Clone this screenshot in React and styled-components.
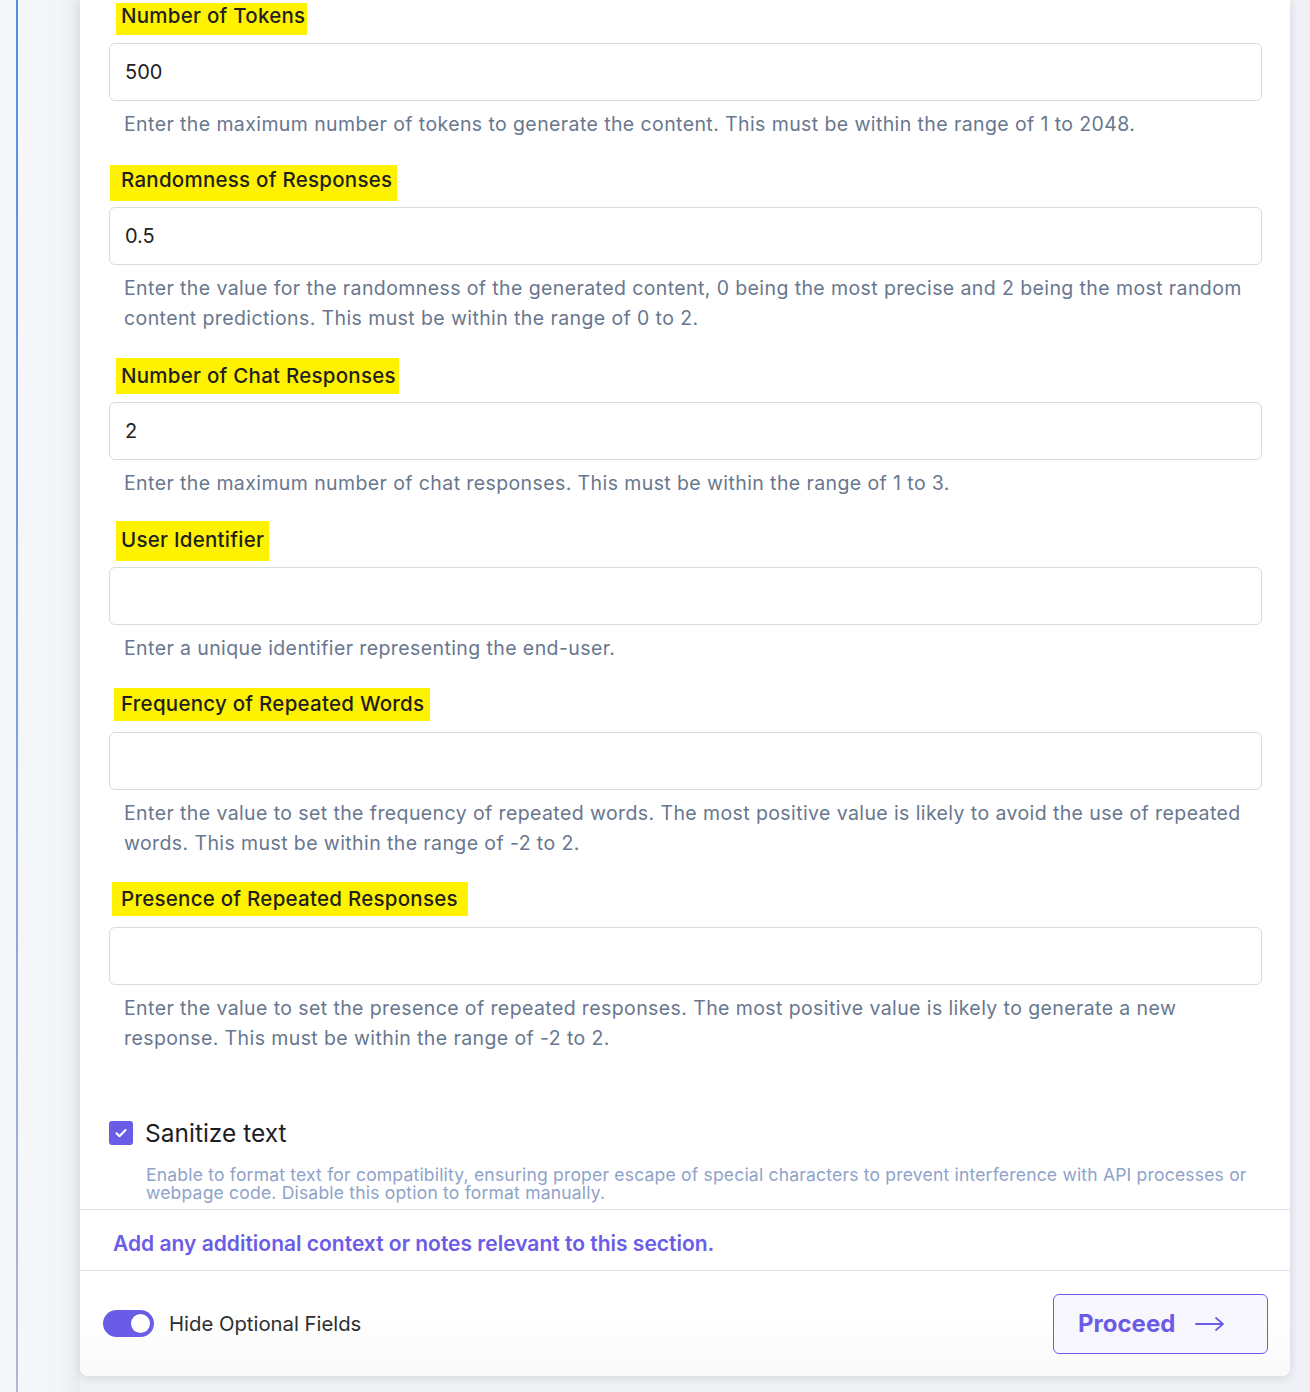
import React from "react";
import styled, { createGlobalStyle } from "styled-components";

const GlobalStyle = createGlobalStyle`
  * { box-sizing: border-box; }
  body {
    margin: 0;
    background: #eef0f4;
    font-family: Inter, "Noto Sans", sans-serif;
  }
`;

const Page = styled.div`
  display: flex;
  min-height: 1392px;
`;

const Rail = styled.div`
  width: 80px;
  flex-shrink: 0;
  padding-left: 16px;
  background: linear-gradient(90deg, #f5f7fb 0%, #f3f5f9 70%, #e9ebf0 100%);
`;

const RailLine = styled.div`
  width: 2px;
  height: 100%;
  background: linear-gradient(180deg, #558de4 0%, #7f9fe0 50%, #b5b6cf 100%);
`;

const Card = styled.div`
  width: 1210px;
  height: 1376px;
  background: #fff;
  border-radius: 0 0 8px 8px;
  box-shadow: 0 2px 10px rgba(30, 35, 60, 0.12);
  display: flex;
  flex-direction: column;
`;

const Body = styled.div`
  padding: 3px 28px 0 29px;
`;

const Field = styled.div`
  display: flex;
  flex-direction: column;
  margin-bottom: ${(p) => p.$mb}px;
`;

const Label = styled.div`
  align-self: flex-start;
  background: #fff200;
  color: #1f1f1f;
  font-size: 20.5px;
  letter-spacing: 0.25px;
  font-weight: 500;
  line-height: ${(p) => p.$lh}px;
  height: ${(p) => p.$h}px;
  margin-left: ${(p) => p.$ml}px;
  padding: 0 ${(p) => p.$pr}px 0 ${(p) => p.$pl}px;
  margin-bottom: ${(p) => p.$gap}px;
`;

const Input = styled.div`
  height: 58px;
  border: 1px solid #d9dadd;
  border-radius: 6px;
  display: flex;
  align-items: center;
  padding: 0 15px;
  font-size: 20px;
  color: #222;
`;

const Help = styled.p`
  margin: 8px 0 0 15px;
  font-size: 19.5px;
  letter-spacing: 0.4px;
  line-height: 30px;
  color: #68778e;
`;

const CheckRow = styled.div`
  display: flex;
  align-items: center;
  gap: 12px;
  margin-top: 65px;
`;

const Box = styled.div`
  width: 24px;
  height: 24px;
  border-radius: 3px;
  background: #6b5ce7;
  display: flex;
  align-items: center;
  justify-content: center;
`;

const CheckLabel = styled.span`
  font-size: 24.5px;
  color: #1d1d1f;
`;

const CheckHelp = styled.p`
  margin: 18px 0 0 37px;
  font-size: 17.5px;
  letter-spacing: 0.2px;
  line-height: 18px;
  color: #8ea3c9;
`;

const Notes = styled.div`
  margin-top: 7px;
  border-top: 1px solid #e1e4ee;
  border-bottom: 1px solid #e1e4ee;
  height: 62px;
  display: flex;
  align-items: center;
  padding: 6px 0 0 33px;
  font-size: 21px;
  font-weight: 600;
  color: #6b5ce7;
`;

const Footer = styled.div`
  flex: 1;
  display: flex;
  align-items: center;
  justify-content: space-between;
  padding: 0 22px 0 23px;
  background: linear-gradient(180deg, #fff 40%, #f9f9fa 100%);
  border-radius: 0 0 8px 8px;
`;

const ToggleWrap = styled.div`
  display: flex;
  align-items: center;
  gap: 15px;
  font-size: 20.3px;
  color: #2e2e30;
`;

const Toggle = styled.div`
  width: 51px;
  height: 27px;
  border-radius: 14px;
  background: #6b5ce7;
  display: flex;
  align-items: center;
  justify-content: flex-end;
  padding-right: 4px;
`;

const Knob = styled.div`
  width: 19px;
  height: 19px;
  border-radius: 50%;
  background: #fff;
`;

const Proceed = styled.button`
  width: 215px;
  height: 60px;
  border: 1px solid #6b5ce7;
  border-radius: 6px;
  background: #f8f7fe;
  color: #6b5ce7;
  font-family: Inter, "Noto Sans", sans-serif;
  font-size: 24px;
  font-weight: 700;
  display: flex;
  align-items: center;
  gap: 20px;
  padding: 0 0 0 24px;
`;

const fields = [
  { label: "Number of Tokens", value: "500", help: "Enter the maximum number of tokens to generate the content. This must be within the range of 1 to 2048.", h: 32, lh: 25, ml: 7, pl: 5, pr: 2, gap: 8, mb: 26 },
  { label: "Randomness of Responses", value: "0.5", help: "Enter the value for the randomness of the generated content, 0 being the most precise and 2 being the most random content predictions. This must be within the range of 0 to 2.", h: 36, lh: 30, ml: 1, pl: 11, pr: 5, gap: 6, mb: 25 },
  { label: "Number of Chat Responses", value: "2", help: "Enter the maximum number of chat responses. This must be within the range of 1 to 3.", h: 36, lh: 35, ml: 7, pl: 5, pr: 3, gap: 8, mb: 23 },
  { label: "User Identifier", value: "", help: "Enter a unique identifier representing the end-user.", h: 40, lh: 38, ml: 7, pl: 5, pr: 5, gap: 6, mb: 25 },
  { label: "Frequency of Repeated Words", value: "", help: "Enter the value to set the frequency of repeated words. The most positive value is likely to avoid the use of repeated words. This must be within the range of -2 to 2.", h: 33, lh: 32, ml: 5, pl: 7, pr: 6, gap: 11, mb: 24 },
  { label: "Presence of Repeated Responses", value: "", help: "Enter the value to set the presence of repeated responses. The most positive value is likely to generate a new response. This must be within the range of -2 to 2.", h: 34, lh: 33, ml: 3, pl: 9, pr: 10, gap: 11, mb: 0 },
];

export default function App() {
  return (
    <>
      <GlobalStyle />
      <Page>
        <Rail>
          <RailLine />
        </Rail>
        <Card>
          <Body>
            {fields.map((f) => (
              <Field key={f.label} $mb={f.mb}>
                <Label $h={f.h} $lh={f.lh} $ml={f.ml} $pl={f.pl} $pr={f.pr} $gap={f.gap}>
                  {f.label}
                </Label>
                <Input>{f.value}</Input>
                <Help>{f.help}</Help>
              </Field>
            ))}
            <CheckRow>
              <Box>
                <svg width="14" height="14" viewBox="0 0 14 14" fill="none">
                  <path d="M2.5 7.2l3 3 6-6.2" stroke="#fff" strokeWidth="2" strokeLinecap="round" strokeLinejoin="round" />
                </svg>
              </Box>
              <CheckLabel>Sanitize text</CheckLabel>
            </CheckRow>
            <CheckHelp>
              Enable to format text for compatibility, ensuring proper escape of special characters to prevent interference with API processes or webpage code. Disable this option to format manually.
            </CheckHelp>
          </Body>
          <Notes>Add any additional context or notes relevant to this section.</Notes>
          <Footer>
            <ToggleWrap>
              <Toggle>
                <Knob />
              </Toggle>
              Hide Optional Fields
            </ToggleWrap>
            <Proceed>
              Proceed
              <svg width="30" height="16" viewBox="0 0 30 16" fill="none">
                <path d="M1 8h27M21 2l7 6-7 6" stroke="#6b5ce7" strokeWidth="1.8" strokeLinecap="round" strokeLinejoin="round" />
              </svg>
            </Proceed>
          </Footer>
        </Card>
      </Page>
    </>
  );
}
